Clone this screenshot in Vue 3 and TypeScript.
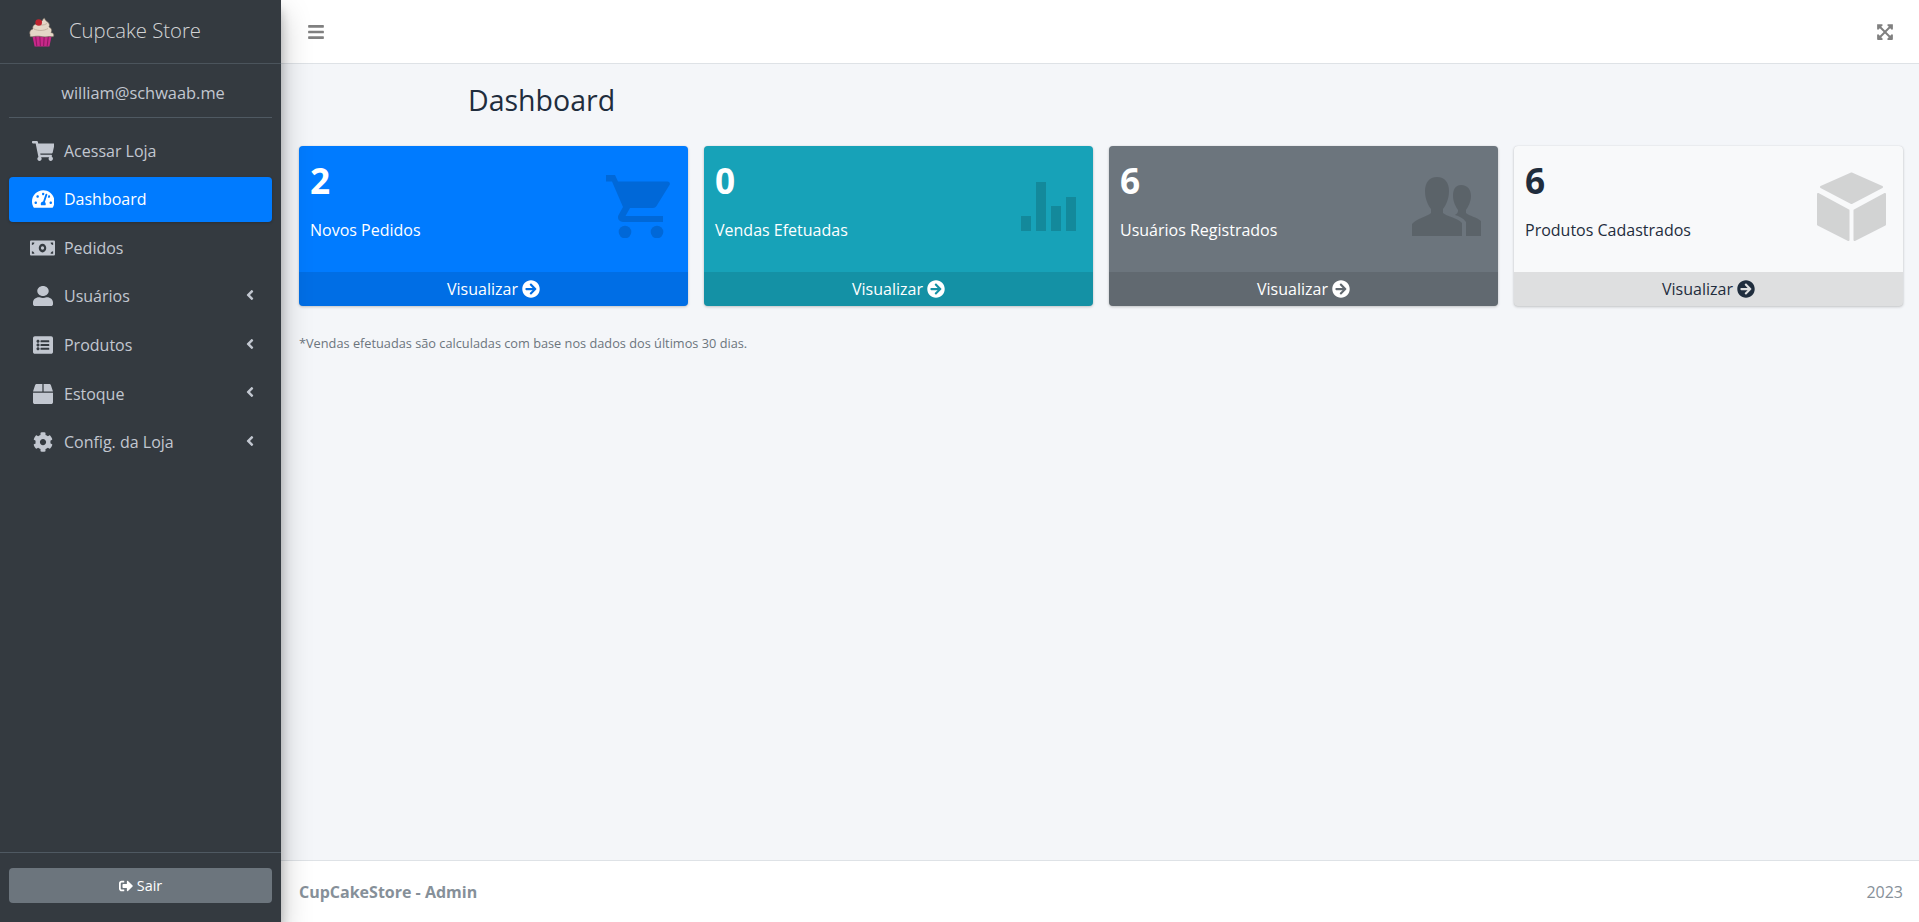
<script setup lang="ts">
interface NavItem { label: string; vb: string; w: number; h: number; d: string; active?: boolean; more?: boolean; stretch?: boolean; dot?: boolean }
const cart = 'M528.12 301.319l47.273-208C578.806 78.301 567.391 64 551.99 64H159.208l-9.166-44.81C147.758 8.021 137.93 0 126.529 0H24C10.745 0 0 10.745 0 24v16c0 13.255 10.745 24 24 24h69.883l70.248 343.435C147.325 417.1 136 435.222 136 456c0 30.928 25.072 56 56 56s56-25.072 56-56c0-15.674-6.447-29.835-16.824-40h209.647C430.447 426.165 424 440.326 424 456c0 30.928 25.072 56 56 56s56-25.072 56-56c0-22.172-12.888-41.332-31.579-50.405l5.517-24.276c3.413-15.018-8.002-29.319-23.403-29.319H218.117l-6.545-32h293.145c11.206 0 20.92-7.754 23.403-18.681z'
const gauge = 'M288 32C128.94 32 0 160.94 0 320c0 52.8 14.25 102.26 39.06 144.8 5.61 9.62 16.3 15.2 27.44 15.2h443c11.14 0 21.83-5.58 27.44-15.2C561.75 422.26 576 372.8 576 320c0-159.06-128.94-288-288-288zm0 64c14.71 0 26.58 10.13 30.32 23.65-1.11 2.26-2.64 4.23-3.45 6.67l-9.22 27.67c-5.13 3.49-10.97 6.01-17.64 6.01-17.67 0-32-14.33-32-32S270.33 96 288 96zM96 384c-17.67 0-32-14.33-32-32s14.33-32 32-32 32 14.33 32 32-14.33 32-32 32zm48-160c-17.67 0-32-14.33-32-32s14.33-32 32-32 32 14.33 32 32-14.33 32-32 32zm246.77-72.41l-61.33 184C343.13 347.33 352 364.54 352 384c0 11.72-3.38 22.55-8.88 32H232.88c-5.5-9.45-8.88-20.28-8.88-32 0-33.94 26.5-61.43 59.9-63.59l61.34-184.01c4.17-12.56 17.73-19.45 30.36-15.17 12.57 4.19 19.35 17.79 15.17 30.36zm14.66 57.2l15.52-46.55c3.47-1.29 7.13-2.23 11.05-2.23 17.67 0 32 14.33 32 32s-14.33 32-32 32c-11.38-.01-20.89-6.28-26.57-15.22zM480 384c-17.67 0-32-14.33-32-32s14.33-32 32-32 32 14.33 32 32-14.33 32-32 32z'
const money = 'M608 64H32C14.33 64 0 78.33 0 96v320c0 17.67 14.33 32 32 32h576c17.67 0 32-14.33 32-32V96c0-17.67-14.33-32-32-32zM48 400v-64c35.35 0 64 28.65 64 64H48zm0-224v-64h64c0 35.35-28.65 64-64 64zm272 192c-53 0-96-50.15-96-112 0-61.86 43-112 96-112s96 50.14 96 112c0 61.87-43 112-96 112zm272 32h-64c0-35.35 28.65-64 64-64v64zm0-224c-35.35 0-64-28.65-64-64h64v64z'
const user = 'M224 256c70.7 0 128-57.3 128-128S294.7 0 224 0 96 57.3 96 128s57.3 128 128 128zm89.6 32h-16.7c-22.2 10.2-46.9 16-72.9 16s-50.6-5.8-72.9-16h-16.7C60.2 288 0 348.2 0 422.4V464c0 26.5 21.5 48 48 48h352c26.5 0 48-21.5 48-48v-41.6c0-74.2-60.2-134.4-134.4-134.4z'
const list = 'M464 480H48c-26.51 0-48-21.49-48-48V80c0-26.51 21.49-48 48-48h416c26.51 0 48 21.49 48 48v352c0 26.51-21.49 48-48 48zM128 120c-22.091 0-40 17.909-40 40s17.909 40 40 40 40-17.909 40-40-17.909-40-40-40zm0 96c-22.091 0-40 17.909-40 40s17.909 40 40 40 40-17.909 40-40-17.909-40-40-40zm0 96c-22.091 0-40 17.909-40 40s17.909 40 40 40 40-17.909 40-40-17.909-40-40-40zm288-136v-32c0-6.627-5.373-12-12-12H204c-6.627 0-12 5.373-12 12v32c0 6.627 5.373 12 12 12h200c6.627 0 12-5.373 12-12zm0 96v-32c0-6.627-5.373-12-12-12H204c-6.627 0-12 5.373-12 12v32c0 6.627 5.373 12 12 12h200c6.627 0 12-5.373 12-12zm0 96v-32c0-6.627-5.373-12-12-12H204c-6.627 0-12 5.373-12 12v32c0 6.627 5.373 12 12 12h200c6.627 0 12-5.373 12-12z'
const box = 'M509.5 184.6L458.9 32.8C452.4 13.2 434.1 0 413.4 0H272v192h238.7c-.4-2.5-.4-5-1.2-7.4zM240 0H98.6c-20.7 0-39 13.2-45.5 32.8L2.5 184.6c-.8 2.4-.8 4.9-1.2 7.4H240V0zM0 224v240c0 26.5 21.5 48 48 48h416c26.5 0 48-21.5 48-48V224H0z'
const cog = 'M487.4 315.7l-42.6-24.6c4.3-23.2 4.3-47 0-70.2l42.6-24.6c4.9-2.8 7.1-8.6 5.5-14-11.1-35.6-30-67.8-54.7-94.6-3.8-4.1-10-5.1-14.8-2.3L380.8 110c-17.9-15.4-38.5-27.3-60.8-35.1V25.8c0-5.6-3.9-10.5-9.4-11.7-36.7-8.2-74.3-7.8-109.2 0-5.5 1.2-9.4 6.1-9.4 11.7V75c-22.2 7.9-42.8 19.8-60.8 35.1L88.7 85.5c-4.9-2.8-11-1.9-14.8 2.3-24.7 26.7-43.6 58.9-54.7 94.6-1.7 5.4.6 11.2 5.5 14L67.3 221c-4.3 23.2-4.3 47 0 70.2l-42.6 24.6c-4.9 2.8-7.1 8.6-5.5 14 11.1 35.6 30 67.8 54.7 94.6 3.8 4.1 10 5.1 14.8 2.3l42.6-24.6c17.9 15.4 38.5 27.3 60.8 35.1v49.2c0 5.6 3.9 10.5 9.4 11.7 36.7 8.2 74.3 7.8 109.2 0 5.5-1.2 9.4-6.1 9.4-11.7v-49.2c22.2-7.9 42.8-19.8 60.8-35.1l42.6 24.6c4.9 2.8 11 1.9 14.8-2.3 24.7-26.7 43.6-58.9 54.7-94.6 1.5-5.5-.7-11.3-5.6-14.1zM256 336c-44.1 0-80-35.9-80-80s35.9-80 80-80 80 35.9 80 80-35.9 80-80 80z'
const angle = 'M31.7 239l136-136c9.4-9.4 24.6-9.4 33.9 0l22.6 22.6c9.4 9.4 9.4 24.6 0 33.9L127.9 256l96.4 96.4c9.4 9.4 9.4 24.6 0 33.9L201.7 409c-9.4 9.4-24.6 9.4-33.9 0l-136-136c-9.5-9.4-9.5-24.6-.1-34z'
const arrow = 'M256 8c137 0 248 111 248 248S393 504 256 504 8 393 8 256 119 8 256 8zm-28.9 143.6l75.5 72.4H120c-13.3 0-24 10.7-24 24v16c0 13.3 10.7 24 24 24h182.6l-75.5 72.4c-9.7 9.3-9.9 24.8-.4 34.3l11 10.9c9.4 9.4 24.6 9.4 33.9 0L404.3 273c9.4-9.4 9.4-24.6 0-33.9L271.6 106.3c-9.4-9.4-24.6-9.4-33.9 0l-11 10.9c-9.5 9.6-9.3 25.1.4 34.4z'
const bars = 'M16 132h416c8.837 0 16-7.163 16-16V76c0-8.837-7.163-16-16-16H16C7.163 60 0 67.163 0 76v40c0 8.837 7.163 16 16 16zm0 160h416c8.837 0 16-7.163 16-16v-40c0-8.837-7.163-16-16-16H16c-8.837 0-16 7.163-16 16v40c0 8.837 7.163 16 16 16zm0 160h416c8.837 0 16-7.163 16-16v-40c0-8.837-7.163-16-16-16H16c-8.837 0-16 7.163-16 16v40c0 8.837 7.163 16 16 16z'
const expand = 'M448 344v112a23.94 23.94 0 0 1-24 24H312c-21.39 0-32.09-25.9-17-41l36.2-36.2L224 295.6 116.77 402.9 153 439c15.09 15.1 4.39 41-17 41H24a23.94 23.94 0 0 1-24-24V344c0-21.4 25.89-32.1 41-17l36.19 36.2L184.46 256 77.18 148.7 41 185c-15.1 15.1-41 4.4-41-17V56a23.94 23.94 0 0 1 24-24h112c21.39 0 32.09 25.9 17 41l-36.2 36.2L224 216.4l107.23-107.3L295 73c-15.09-15.1-4.39-41 17-41h112a23.94 23.94 0 0 1 24 24v112c0 21.4-25.89 32.1-41 17l-36.19-36.2L263.54 256l107.28 107.3L407 327.1c15.1-15.2 41-4.5 41 16.9z'
const signOut = 'M497 273L329 441c-15 15-41 4.5-41-17v-96H152c-13.3 0-24-10.7-24-24v-96c0-13.3 10.7-24 24-24h136V88c0-21.4 25.9-32 41-17l168 168c9.3 9.4 9.3 24.6 0 34zM192 436v-40c0-6.6-5.4-12-12-12H96c-17.7 0-32-14.3-32-32V160c0-17.7 14.3-32 32-32h84c6.6 0 12-5.4 12-12V76c0-6.6-5.4-12-12-12H96c-53 0-96 43-96 96v192c0 53 43 96 96 96h84c6.6 0 12-5.4 12-12z'

const nav: NavItem[] = [
  { label: 'Acessar Loja', vb: '0 0 576 512', w: 22.5, h: 20, d: cart },
  { label: 'Dashboard', vb: '0 0 576 512', w: 22.5, h: 20, d: gauge, active: true },
  { label: 'Pedidos', vb: '0 0 640 512', w: 25, h: 20, d: money, dot: true },
  { label: 'Usuários', vb: '0 0 448 512', w: 20, h: 20, d: user, more: true, stretch: true },
  { label: 'Produtos', vb: '0 0 512 512', w: 20, h: 20, d: list, more: true },
  { label: 'Estoque', vb: '0 0 512 512', w: 20, h: 20, d: box, more: true },
  { label: 'Config. da Loja', vb: '0 0 512 512', w: 20, h: 20, d: cog, more: true },
]
const cards = [
  { n: '2', label: 'Novos Pedidos', cls: 'primary', icon: 'cart' },
  { n: '0', label: 'Vendas Efetuadas', cls: 'info', icon: 'stats' },
  { n: '6', label: 'Usuários Registrados', cls: 'secondary', icon: 'users' },
  { n: '6', label: 'Produtos Cadastrados', cls: 'light', icon: 'cube' },
]
</script>

<template>
  <div class="app">
    <aside class="sidebar">
      <div class="brand">
        <svg class="logo" viewBox="0 0 26 32" width="26" height="32">
          <path d="M3 19h20l-2.600 12.400H5.600z" fill="#c9288a" />
          <path d="M6.500 20l1.300 11M10.700 20l.7 11M15.300 20l-.7 11M19.500 20l-1.300 11" stroke="#8f1a63" stroke-width="1.100" fill="none" />
          <path d="M1 19.500c-1-2.500.5-5 3-5.500-1-2.500 1-5 4-5 1.500-.3 3-2 5-3 .8-1.600 1.500-2.500 2.500-3 .5 1.500 1 2.500 2.500 3.500 2.500 1.500 3 3.500 2 5.500 2.500 1 3.500 3.500 2 5.500 2.500.5 3.500 2 2.500 4-2 .5-3 0-4.500 0-2.500.5-5.500.5-8 0-2.500-.5-5-.3-7 0-1.500.2-3 .5-4 0z" fill="#e4d7c7" stroke="#6c5f55" stroke-width=".6" />
          <path d="M5 14c4 2 10 2 14-.5M8 9c3 1.500 7 1.500 10-.5" stroke="#bfae9d" stroke-width=".9" fill="none" />
          <circle cx="9.700" cy="7.500" r="3.300" fill="#c0242f" />
        </svg>
        <span class="brand-text">Cupcake Store</span>
      </div>
      <div class="user-panel">william@schwaab.me</div>
      <nav class="nav">
        <a v-for="item in nav" :key="item.label" class="nav-link" :class="{ active: item.active }">
          <span class="nav-icon">
            <svg :viewBox="item.vb" :width="item.w" :height="item.h" :preserveAspectRatio="item.stretch ? 'none' : 'xMidYMid meet'" fill="currentColor">
              <path :d="item.d" />
              <circle v-if="item.dot" cx="320" cy="256" r="42" />
            </svg>
          </span>
          <span class="nav-label">{{ item.label }}</span>
          <svg v-if="item.more" class="chevron" viewBox="0 0 256 512" width="8" height="16" fill="currentColor">
            <path :d="angle" />
          </svg>
        </a>
      </nav>
      <div class="side-bottom">
        <button class="logout" type="button">
          <svg viewBox="0 0 512 512" width="14" height="14" fill="currentColor"><path :d="signOut" /></svg>
          <span>Sair</span>
        </button>
      </div>
    </aside>

    <div class="main">
      <header class="navbar">
        <svg viewBox="0 0 448 512" width="16" height="18" fill="currentColor"><path :d="bars" /></svg>
        <svg viewBox="0 0 448 512" width="16" height="18" fill="currentColor"><path :d="expand" /></svg>
      </header>

      <main class="content">
        <h1 class="title">Dashboard</h1>
        <div class="cards">
          <div v-for="c in cards" :key="c.label" class="card" :class="c.cls">
            <div class="card-body">
              <div class="num">{{ c.n }}</div>
              <div class="lbl">{{ c.label }}</div>
              <svg v-if="c.icon === 'cart'" class="card-icon i-cart" viewBox="0 0 64 63" width="64" height="63" fill="#000">
                <path d="M0 0H9L12 6.500H61.500C63.500 6.500 64.500 8.500 63.500 10L50.500 31C49.800 32.300 48.500 33 47 33H24L19.500 41H57V47H17C13.500 47 11 44 12.300 40.500L17 32 6 6.500H0Z" />
                <circle cx="19" cy="57" r="6.300" />
                <circle cx="51" cy="57" r="6.300" />
              </svg>
              <svg v-else-if="c.icon === 'stats'" class="card-icon i-stats" viewBox="0 0 55 49" width="55" height="49" fill="#000">
                <rect x="0" y="34" width="10" height="15" />
                <rect x="15" y="0" width="10" height="49" />
                <rect x="30" y="24" width="10" height="25" />
                <rect x="45" y="15" width="10" height="34" />
              </svg>
              <svg v-else-if="c.icon === 'users'" class="card-icon i-users" viewBox="0 0 69 59" width="69" height="59" fill="#000">
                <path d="M25 0C33 0 37 6 37 14 37 22 34 28 31 32V36C34 39 46 41 50 46V59H0V47C4 42 16 39 19 36V32C16 28 13 22 13 14 13 6 17 0 25 0Z" />
                <path d="M49 8C56 8 59 13 59 19 59 25 56 30 54 33V36C57 39 65 40 69 44V59H54V45C51 41 47 39 43 38 46 36 46 35 46 33 44 30 41 25 41 19 41 13 43 8 49 8Z" />
              </svg>
              <svg v-else class="card-icon i-cube" viewBox="0 0 69 69" width="69" height="69" fill="#000" stroke="#000" stroke-width="2" stroke-linejoin="round">
                <path d="M34.500 1.500 65 15 34.500 31 4 15Z" />
                <path d="M1 22 31.500 38.500V68L1 52.500Z" />
                <path d="M68 22 37.500 38.500V68L68 52.500Z" />
              </svg>
            </div>
            <a class="card-foot">
              <span>Visualizar</span>
              <svg viewBox="0 0 512 512" width="18" height="18" fill="currentColor"><path :d="arrow" /></svg>
            </a>
          </div>
        </div>
        <p class="note">*Vendas efetuadas são calculadas com base nos dados dos últimos 30 dias.</p>
      </main>

      <footer class="footer">
        <strong>CupCakeStore - Admin</strong>
        <span>2023</span>
      </footer>
    </div>
  </div>
</template>

<style>
html, body { margin: 0; padding: 0; overflow: hidden; }
</style>

<style scoped>
.app {
  display: flex;
  height: 922px;
  overflow: hidden;
  font-family: "Open Sans", "Noto Sans", sans-serif;
  font-size: 16px;
  color: #1f2d3d;
}
.sidebar {
  position: relative;
  z-index: 2;
  width: 281px;
  flex: none;
  display: flex;
  flex-direction: column;
  background: #343a40;
  box-shadow: 0 14px 28px rgba(0, 0, 0, .25), 0 10px 10px rgba(0, 0, 0, .22);
}
.brand {
  height: 63px;
  box-sizing: content-box;
  border-bottom: 1px solid #4b545c;
  display: flex;
  align-items: center;
  padding-left: 29px;
  gap: 14px;
}
.logo { margin-top: -1px; }
.brand-text {
  color: rgba(255, 255, 255, .8);
  font-size: 20.3px;
  font-weight: 300;
  line-height: 24px;
  margin-top: -3px;
}
.user-panel {
  margin: 0 9px;
  height: 54px;
  box-sizing: border-box;
  border-bottom: 1px solid #4f5962;
  display: flex;
  align-items: center;
  justify-content: center;
  padding: 3px 0 0 5px;
  font-size: 16.4px;
  color: #c2c7d0;
}
.nav {
  flex: 1;
  display: flex;
  flex-direction: column;
  gap: 3.2px;
  padding: 10px 9px 0;
}
.nav-link {
  height: 45.4px;
  display: flex;
  align-items: center;
  padding-left: 21px;
  border-radius: 4px;
  color: #c2c7d0;
}
.nav-link.active {
  background: #007bff;
  color: #fff;
  box-shadow: 0 1px 3px rgba(0, 0, 0, .2);
}
.nav-icon {
  width: 25.6px;
  margin-right: 8.400px;
  display: flex;
  justify-content: center;
  flex: none;
}
.nav-label { flex: 1; }
.chevron { margin-right: 18px; margin-top: -3px; }
.side-bottom {
  border-top: 1px solid #4f5962;
  padding: 15px 9px 19px;
}
.logout {
  width: 100%;
  height: 35px;
  border: 0;
  border-radius: 4px;
  background: #6c757d;
  color: #fff;
  font: inherit;
  font-size: 14.4px;
  display: flex;
  align-items: center;
  justify-content: center;
  gap: 4px;
}
.main {
  flex: 1;
  min-width: 0;
  display: flex;
  flex-direction: column;
  background: #f4f6f9;
}
.navbar {
  height: 63px;
  box-sizing: content-box;
  background: #fff;
  border-bottom: 1px solid #dee2e6;
  display: flex;
  align-items: center;
  justify-content: space-between;
  padding: 0 26px 0 27px;
  color: #808080;
}
.content {
  flex: 1;
  padding: 0 16px 0 18px;
}
.title {
  margin: 0;
  padding: 17px 0 0 169px;
  height: 82px;
  box-sizing: border-box;
  font-size: 28.5px;
  font-weight: 400;
  line-height: 38px;
}
.cards {
  display: grid;
  grid-template-columns: repeat(4, 1fr);
  gap: 16px;
}
.card {
  border-radius: 4px;
  overflow: hidden;
  box-shadow: 0 0 1px rgba(0, 0, 0, .125), 0 1px 3px rgba(0, 0, 0, .2);
}
.card.primary { background: #007bff; color: #fff; }
.card.info { background: #17a2b8; color: #fff; }
.card.secondary { background: #6c757d; color: #fff; }
.card.light { background: #f8f9fa; color: #1f2d3d; }
.card-body {
  position: relative;
  height: 126px;
  box-sizing: border-box;
  padding: 12px 11px 0;
}
.num {
  font-size: 35.2px;
  font-weight: 700;
  line-height: 44px;
}
.lbl {
  margin-top: 16px;
  line-height: 24px;
}
.card-icon {
  position: absolute;
  opacity: .15;
}
.i-cart { right: 18px; top: 29px; }
.i-stats { right: 17px; top: 36px; }
.i-users { right: 17px; top: 31px; }
.i-cube { right: 17px; top: 26px; }
.card-foot {
  height: 33px;
  padding-bottom: 1px;
  background: rgba(0, 0, 0, .1);
  display: flex;
  align-items: center;
  justify-content: center;
  gap: 4px;
}
.note {
  margin: 28px 0 0;
  font-size: 12.75px;
  line-height: 18px;
  color: #6c757d;
}
.footer {
  height: 61px;
  box-sizing: content-box;
  background: #fff;
  border-top: 1px solid #dee2e6;
  display: flex;
  align-items: center;
  justify-content: space-between;
  padding: 0 16px 0 18px;
  color: #869099;
}
</style>
